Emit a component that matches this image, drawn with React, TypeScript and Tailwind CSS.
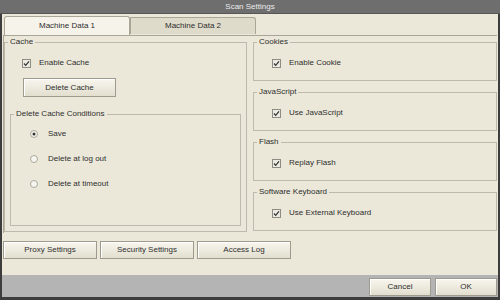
import type { ReactNode } from 'react';

const font = { fontFamily: '"Liberation Sans", Arial, sans-serif' };

function CheckBox() {
  return (
    <svg width="9" height="9" viewBox="0 0 9 9" className="shrink-0">
      <rect x="0.5" y="0.5" width="8" height="8" fill="#ecebe3" stroke="#8f8d83" />
      <path d="M2 4.5 L3.7 6.3 L7 2.3" fill="none" stroke="#333" strokeWidth="1.2" />
    </svg>
  );
}

function Radio({ checked }: { checked?: boolean }) {
  return (
    <svg width="8" height="8" viewBox="0 0 8 8" className="shrink-0">
      <circle cx="4" cy="4" r="3.5" fill="#f6f5ef" stroke="#aaa89c" />
      {checked && <circle cx="4" cy="4" r="1.5" fill="#333" />}
    </svg>
  );
}

function Button({ label, className = '' }: { label: string; className?: string }) {
  return (
    <button
      className={`h-[18px] border border-[#9e9b8e] bg-gradient-to-b from-[#f8f6ee] to-[#e2dfcf] shadow-[inset_1px_1px_0_#ffffff] text-[8px] text-[#2e2e2e] leading-none ${className}`}
    >
      {label}
    </button>
  );
}

function Group({ title, className = '', children }: { title: string; className?: string; children: ReactNode }) {
  return (
    <fieldset className={`border border-[#bdbaad] ${className}`}>
      <legend className="ml-[3px] px-[2px] text-[8px] leading-[10px] text-[#2e2e2e]">{title}</legend>
      {children}
    </fieldset>
  );
}

function CheckRow({ label }: { label: string }) {
  return (
    <div className="flex items-center gap-[8px] h-[12px] text-[8px] text-[#2e2e2e]">
      <CheckBox />
      <span>{label}</span>
    </div>
  );
}

function RadioRow({ label, checked }: { label: string; checked?: boolean }) {
  return (
    <div className="flex items-center gap-[10px] h-[12px] text-[8px] text-[#2e2e2e]">
      <Radio checked={checked} />
      <span>{label}</span>
    </div>
  );
}

export default function App() {
  return (
    <div className="w-[500px] h-[300px] flex flex-col bg-[#3d3d3d]" style={font}>
      {/* Title */}
      <div className="h-[14px] bg-[#6e6e6e] border-b border-[#575757] text-center text-[8px] leading-[13px] text-[#ececec]">
        Scan Settings
      </div>

      <div className="flex-1 mx-[2px] mb-[3px] bg-[#ebe8d9] flex flex-col">
        {/* Tabs */}
        <div className="h-[21px] pl-[2px] flex items-end">
          <div className="w-[126px] h-[19px] bg-[#f6f4ea] border border-b-0 border-[#a9a697] rounded-tl-[3px] rounded-tr-[3px] flex items-center justify-center text-[8px] text-[#2e2e2e]">
            Machine Data 1
          </div>
          <div className="w-[126px] h-[17px] mb-[1px] bg-[#dfdbca] border border-b-0 border-[#a9a697] rounded-tr-[3px] flex items-center justify-center text-[8px] text-[#2e2e2e]">
            Machine Data 2
          </div>
        </div>

        {/* Panel */}
        <div className="h-[198px] ml-[1px] mr-[1px] border-t border-l border-[#a9a697] pt-[1px] flex gap-[6px]">
          <Group title="Cache" className="w-[243px] h-[195px]">
            <div className="pl-[17px] mt-[10px]">
              <CheckRow label="Enable Cache" />
            </div>
            <Button label="Delete Cache" className="ml-[18px] mt-[9px] w-[93px] h-[19px] block" />
            <Group title="Delete Cache Conditions" className="ml-[5px] mt-[12px] w-[231px] h-[117px]">
              <div className="pl-[19px] pt-[9px] flex flex-col gap-[13px]">
                <RadioRow label="Save" checked />
                <RadioRow label="Delete at log out" />
                <RadioRow label="Delete at timeout" />
              </div>
            </Group>
          </Group>

          <div className="w-[244px] flex flex-col gap-[6px]">
            <Group title="Cookies" className="h-[44px]">
              <div className="pl-[18px] pt-[10px]">
                <CheckRow label="Enable Cookie" />
              </div>
            </Group>
            <Group title="JavaScript" className="h-[44px]">
              <div className="pl-[18px] pt-[10px]">
                <CheckRow label="Use JavaScript" />
              </div>
            </Group>
            <Group title="Flash" className="h-[44px]">
              <div className="pl-[18px] pt-[10px]">
                <CheckRow label="Replay Flash" />
              </div>
            </Group>
            <Group title="Software Keyboard" className="h-[44px]">
              <div className="pl-[18px] pt-[10px]">
                <CheckRow label="Use External Keyboard" />
              </div>
            </Group>
          </div>
        </div>

        {/* Bottom buttons */}
        <div className="mt-[8px] pl-[1px] flex gap-[3px]">
          <Button label="Proxy Settings" className="w-[94px]" />
          <Button label="Security Settings" className="w-[94px]" />
          <Button label="Access Log" className="w-[94px]" />
        </div>

        <div className="flex-1" />

        {/* Footer */}
        <div className="h-[22px] bg-[#b4b4b4] pt-[3px] pr-[1px] flex justify-end gap-[4px]">
          <Button label="Cancel" className="w-[62px]" />
          <Button label="OK" className="w-[62px]" />
        </div>
      </div>
    </div>
  );
}
